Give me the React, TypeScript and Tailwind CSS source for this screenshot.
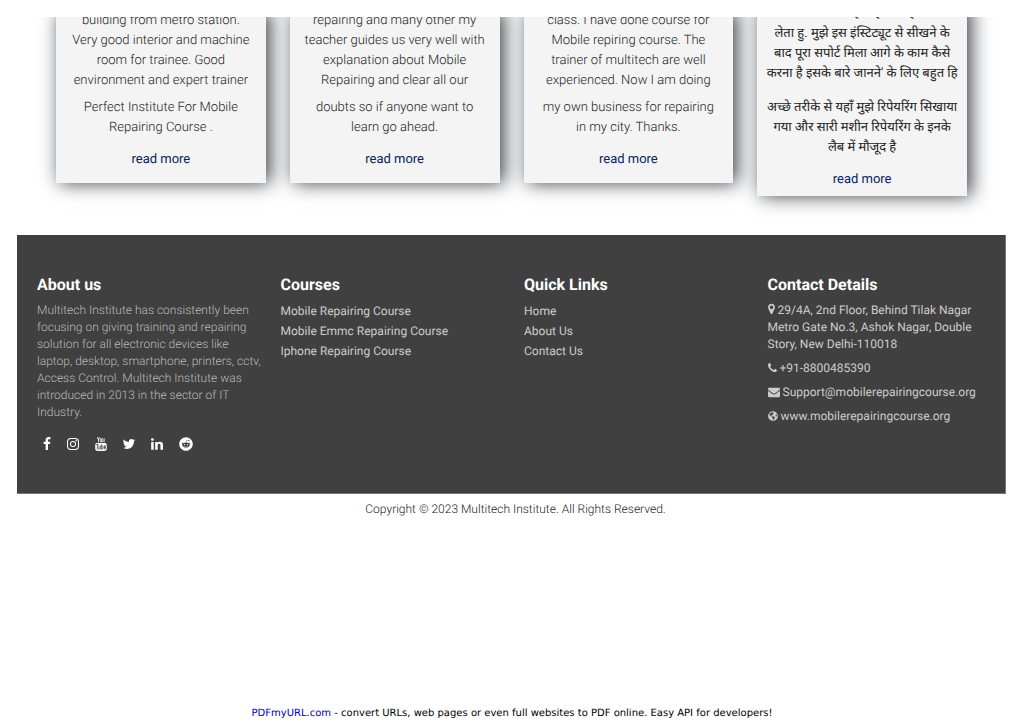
import type { ReactNode } from "react";
import { FaGlobeAmericas, FaReddit } from "react-icons/fa";
import { TfiYoutube } from "react-icons/tfi";

const icons = {
	facebook:
		"M1343 12v264h-157q-86 0-116 36t-30 108v189h293l-39 296h-254v759h-306v-759h-255v-296h255v-218q0-186 104-288.500t277-102.500q147 0 228 12z",
	instagram:
		"M1152 896q0-106-75-181t-181-75-181 75-75 181 75 181 181 75 181-75 75-181zm138 0q0 164-115 279t-279 115-279-115-115-279 115-279 279-115 279 115 115 279zm108-410q0 38-27 65t-65 27-65-27-27-65 27-65 65-27 65 27 27 65zm-502-220q-7 0-76.5-.5t-105.500 0-96.500 3-103 10-71.500 18.500q-50 20-88 58t-58 88q-11 29-18.500 71.500t-10 103-3 96.500 0 105.500.5 76.500-.5 76.500 0 105.500 3 96.500 10 103 18.500 71.500q20 50 58 88t88 58q29 11 71.500 18.500t103 10 96.500 3 105.500 0 76.500-.5 76.500.5 105.500 0 96.500-3 103-10 71.500-18.500q50-20 88-58t58-88q11-29 18.500-71.500t10-103 3-96.500 0-105.500-.5-76.500.5-76.500 0-105.500-3-96.500-10-103-18.500-71.500q-20-50-58-88t-88-58q-29-11-71.500-18.500t-103-10-96.500-3-105.500 0-76.500.5zm768 630q0 229-5 317-10 208-124 322t-322 124q-88 5-317 5t-317-5q-208-10-322-124t-124-322q-5-88-5-317t5-317q10-208 124-322t322-124q88-5 317-5t317 5q208 10 322 124t124 322q5 88 5 317z",
	twitter:
		"M1684 408q-67 98-162 167 1 14 1 42 0 130-38 259.500t-115.500 248.500-184.500 210.500-258 146-323 54.500q-271 0-496-145 35 4 78 4 225 0 401-138-105-2-188-64.500t-114-159.500q33 5 61 5 43 0 85-11-112-23-185.500-111.500t-73.500-205.500v-4q68 38 146 41-66-44-105-115t-39-154q0-88 44-163 121 149 294.500 238.500t371.500 99.500q-8-38-8-74 0-134 94.500-228.500t228.500-94.500q140 0 236 102 109-21 205-78-37 115-142 178 93-10 186-50z",
	linkedin:
		"M477 625v991h-330v-991h330zm21-306q1 73-50.500 122t-135.500 49h-2q-82 0-132-49t-50-122q0-74 51.500-122.500t134.500-48.500 133 48.500 51 122.500zm1166 729v568h-329v-530q0-105-40.500-164.500t-126.500-59.500q-63 0-105.500 34.500t-63.500 85.500q-11 30-11 81v553h-329q2-399 2-647t-1-296l-1-48h329v144h-2q20-32 41-56t56.500-52 87-43.500 114.500-15.500q171 0 275 113.500t104 332.500z",
	marker:
		"M1152 640q0-106-75-181t-181-75-181 75-75 181 75 181 181 75 181-75 75-181zm256 0q0 109-33 179l-364 774q-16 33-47.500 52t-67.500 19-67.500-19-46.500-52l-365-774q-33-70-33-179 0-212 150-362t362-150 362 150 150 362z",
	phone:
		"M1600 1240q0 27-10 70.500t-21 68.500q-21 50-122 106-94 51-186 51-27 0-52.500-3.500t-57.500-12.500-47.500-14.500-55.500-20.500-49-18q-98-35-175-83-128-79-264.500-215.500t-215.500-264.500q-48-77-83-175-3-9-18-49t-20.500-55.500-14.500-47.500-12.500-57.500-3.500-52.500q0-92 51-186 56-101 106-122 25-11 68.500-21t70.500-10q14 0 21 3 18 6 53 76 11 19 30 54t35 63.500 31 53.500q3 4 17.500 25t21.500 35.500 7 28.500q0 20-28.500 50t-62 55-62 53-28.500 46q0 9 5 22.500t8.500 20.500 14 24 11.500 19q76 137 174 235t235 174q2 1 19 11.500t24 14 20.500 8.500 22.500 5q18 0 46-28.500t53-62 55-62 50-28.500q14 0 28.500 7t35.500 21.500 25 17.500q25 15 53.500 31t63.500 35 54 30q70 35 76 53 3 7 3 21z",
	envelope:
		"M1792 710v794q0 66-47 113t-113 47h-1472q-66 0-113-47t-47-113v-794q44 49 101 87 362 246 497 345 57 42 92.500 65.500t94.500 48 110 24.500h2q51 0 110-24.500t94.500-48 92.500-65.500q170-123 498-345 57-39 100-87zm0-294q0 79-49 151t-122 123q-376 261-468 325-10 7-42.500 31t-54 38.500-52 32.500-57.500 27-50 9h-2q-23 0-50-9t-57.500-27-52-32.500-54-38.500-42.500-31q-91-64-262-182.500t-205-142.500q-62-42-117-115.500t-55-136.500q0-78 41.500-130t118.500-52h1472q65 0 112.500 47t47.500 113z",
};

type GlyphProps = { path: string; viewBox?: string; className: string };

const Glyph = ({ path, viewBox = "0 0 1792 1792", className }: GlyphProps) => (
	<svg viewBox={viewBox} className={className} fill="currentColor" aria-hidden="true">
		<path d={path} />
	</svg>
);

const testimonials = [
	{
		lang: "en",
		lines: ["building from metro station.", "Very good interior and machine", "room for trainee. Good", "environment and expert trainer"],
		more: ["Perfect Institute For Mobile", "Repairing Course ."],
	},
	{
		lang: "en",
		lines: ["repairing and many other my", "teacher guides us very well with", "explanation about Mobile", "Repairing and clear all our"],
		more: ["doubts so if anyone want to", "learn go ahead."],
	},
	{
		lang: "en",
		lines: ["class. I have done course for", "Mobile repiring course. The", "trainer of multitech are well", "experienced. Now I am doing"],
		more: ["my own business for repairing", "in my city. Thanks."],
	},
	{
		lang: "hi",
		lines: ["सभी को बताना चाहता है कि यहाँ से सभी", "लेता हु. मुझे इस इंस्टिट्यूट से सीखने के", "बाद पूरा सपोर्ट मिला आगे के काम कैसे", "करना है इसके बारे जानने' के लिए बहुत हि"],
		more: ["अच्छे तरीके से यहाँ मुझे रिपेयरिंग सिखाया", "गया और सारी मशीन रिपेयरिंग के इनके", "लैब में मौजूद है"],
	},
];

const Lines = ({ lines }: { lines: string[] }) => (
	<>
		{lines.map((line) => (
			<span key={line} className="block whitespace-nowrap">
				{line}
			</span>
		))}
	</>
);

const TestimonialCard = ({ lang, lines, more }: (typeof testimonials)[number]) => {
	const hindi = lang === "hi";
	return (
		<article
			lang={lang}
			className={`flex flex-col items-center bg-[#f4f4f4] text-center text-[13px]/5 shadow-[4px_0_18px_rgba(10,15,25,0.8)] ${
				hindi ? "-mt-[13px] pb-[6px] font-normal text-[#222]" : "-mt-[6px] pb-[13px] font-light text-[#222]"
			}`}
		>
			<p>
				<Lines lines={lines} />
			</p>
			<p className={hindi ? "mt-[14px]" : "mt-[7px]"}>
				<Lines lines={more} />
			</p>
			<a href="#" className="mt-3 font-normal text-[#0a2463]">
				read more
			</a>
		</article>
	);
};

const socials = [
	{ name: "Facebook", icon: <Glyph path={icons.facebook} viewBox="479 0 864 1792" className="h-[14px] w-2" /> },
	{ name: "Instagram", icon: <Glyph path={icons.instagram} viewBox="128 0 1536 1792" className="h-[14px] w-3" /> },
	{ name: "YouTube", icon: <TfiYoutube className="-mx-px size-[14px]" /> },
	{ name: "Twitter", icon: <Glyph path={icons.twitter} viewBox="128 0 1536 1792" className="h-[14px] w-3 overflow-visible" /> },
	{ name: "LinkedIn", icon: <Glyph path={icons.linkedin} viewBox="128 0 1536 1792" className="h-[14px] w-3" /> },
	{ name: "Reddit", icon: <FaReddit className="size-[14px]" /> },
];

type FooterColumnProps = { title: string; className?: string; children: ReactNode };

const FooterColumn = ({ title, className = "px-3", children }: FooterColumnProps) => (
	<section className={className}>
		<h2 className="text-base/6 font-bold text-white">{title}</h2>
		{children}
	</section>
);

const FooterLinks = ({ links }: { links: string[] }) => (
	<ul className="mt-1">
		{links.map((link) => (
			<li key={link}>
				<a href="#">{link}</a>
			</li>
		))}
	</ul>
);

export default function App() {
	return (
		<div className="flex min-h-screen flex-col bg-white pt-[17px] font-[Roboto,'Noto_Sans',sans-serif] [text-rendering:geometricPrecision]">
			<main className="mr-[18px] ml-[17px]">
				<div className="grid grid-cols-4 items-start gap-6 overflow-hidden pr-[39px] pb-[39px] pl-[39px]">
					{testimonials.map((item) => (
						<TestimonialCard key={item.lines[0]} {...item} />
					))}
				</div>
			</main>

			<footer className="mr-[18px] ml-[17px]">
				<div className="grid grid-cols-4 border-r border-b border-[#777] bg-[#404040] pt-[38px] pr-[6px] pb-[41px] pl-2 text-xs/5 text-[#ccc]">
					<FooterColumn title="About us" className="pr-1 pl-3">
						<p className="mt-[5px] text-xs/[17px] font-light text-[#bbb]">
							Multitech Institute has consistently been focusing on giving training and repairing solution for all
							electronic devices like laptop, desktop, smartphone, printers, cctv, Access Control. Multitech Institute
							was introduced in 2013 in the sector of IT Industry.
						</p>
						<ul className="mt-[15px] ml-[6px] flex gap-4 text-white">
							{socials.map((social) => (
								<li key={social.name}>
									<a href="#" aria-label={social.name} className="flex h-4 items-center justify-center">
										{social.icon}
									</a>
								</li>
							))}
						</ul>
					</FooterColumn>
					<FooterColumn title="Courses">
						<FooterLinks links={["Mobile Repairing Course", "Mobile Emmc Repairing Course", "Iphone Repairing Course"]} />
					</FooterColumn>
					<FooterColumn title="Quick Links">
						<FooterLinks links={["Home", "About Us", "Contact Us"]} />
					</FooterColumn>
					<FooterColumn title="Contact Details">
						<address className="mt-[5px] flex flex-col gap-[7px] text-xs/[17px] not-italic">
							<p>
								<Glyph path={icons.marker} viewBox="384 0 1024 1792" className="mr-[3px] inline h-3 w-[7px] align-[-1px]" />
								29/4A, 2nd Floor, Behind Tilak Nagar Metro Gate No.3, Ashok Nagar, Double Story, New Delhi-110018
							</p>
							<a href="tel:+918800485390">
								<Glyph path={icons.phone} viewBox="192 0 1408 1792" className="mr-[3px] inline h-3 w-[9px] align-[-2px]" />
								+91-8800485390
							</a>
							<a href="mailto:Support@mobilerepairingcourse.org">
								<Glyph path={icons.envelope} className="mr-[3px] inline size-3 align-[-2px]" />
								Support@mobilerepairingcourse.org
							</a>
							<a href="#">
								<FaGlobeAmericas className="mr-[3px] inline size-[10px] align-[-1px]" />
								www.mobilerepairingcourse.org
							</a>
						</address>
					</FooterColumn>
				</div>
				<p className="mt-[5px] ml-2 text-center text-xs/5 font-light text-[#222]">
					Copyright © 2023 Multitech Institute. All Rights Reserved.
				</p>
			</footer>

			<p className="mt-auto mb-px text-center font-['DejaVu_Sans',sans-serif] text-[10px]/4 text-black">
				<a href="#" className="text-[#0000cc]">
					PDFmyURL.com
				</a>{" "}
				- convert URLs, web pages or even full websites to PDF online. Easy API for developers!
			</p>
		</div>
	);
}
